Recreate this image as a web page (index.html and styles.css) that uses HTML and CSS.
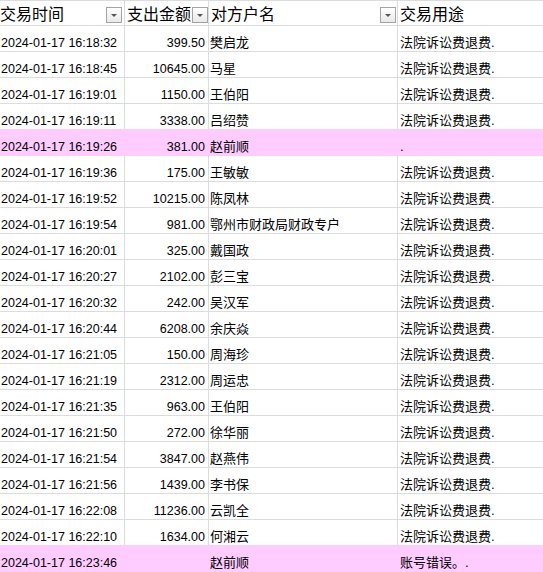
FILE: index.html
```html
<!DOCTYPE html>
<html lang="zh">
<head>
<meta charset="utf-8">
<title>交易明细</title>
<link rel="stylesheet" href="styles.css">
</head>
<body>
<div class="sheet">
  <div class="row head">
    <div class="cell">交易时间<span class="filter f1"><svg width="14" height="14" viewBox="0 0 14 14"><polygon points="4,6 10,6 7,9" fill="#555"/></svg></span></div>
    <div class="cell">支出金额<span class="filter f2"><svg width="14" height="14" viewBox="0 0 14 14"><polygon points="4,6 10,6 7,9" fill="#555"/></svg></span></div>
    <div class="cell">对方户名<span class="filter f3"><svg width="14" height="14" viewBox="0 0 14 14"><polygon points="4,6 10,6 7,9" fill="#555"/></svg></span></div>
    <div class="cell">交易用途</div>
  </div>
  <div class="row"><div class="cell t">2024-01-17 16:18:32</div><div class="cell a">399.50</div><div class="cell n">樊启龙</div><div class="cell p">法院诉讼费退费.</div></div>
  <div class="row"><div class="cell t">2024-01-17 16:18:45</div><div class="cell a">10645.00</div><div class="cell n">马星</div><div class="cell p">法院诉讼费退费.</div></div>
  <div class="row"><div class="cell t">2024-01-17 16:19:01</div><div class="cell a">1150.00</div><div class="cell n">王伯阳</div><div class="cell p">法院诉讼费退费.</div></div>
  <div class="row"><div class="cell t">2024-01-17 16:19:11</div><div class="cell a">3338.00</div><div class="cell n">吕绍赞</div><div class="cell p">法院诉讼费退费.</div></div>
  <div class="row hl"><div class="cell t">2024-01-17 16:19:26</div><div class="cell a">381.00</div><div class="cell n">赵前顺</div><div class="cell p">.</div></div>
  <div class="row"><div class="cell t">2024-01-17 16:19:36</div><div class="cell a">175.00</div><div class="cell n">王敏敏</div><div class="cell p">法院诉讼费退费.</div></div>
  <div class="row"><div class="cell t">2024-01-17 16:19:52</div><div class="cell a">10215.00</div><div class="cell n">陈凤林</div><div class="cell p">法院诉讼费退费.</div></div>
  <div class="row"><div class="cell t">2024-01-17 16:19:54</div><div class="cell a">981.00</div><div class="cell n">鄂州市财政局财政专户</div><div class="cell p">法院诉讼费退费.</div></div>
  <div class="row"><div class="cell t">2024-01-17 16:20:01</div><div class="cell a">325.00</div><div class="cell n">戴国政</div><div class="cell p">法院诉讼费退费.</div></div>
  <div class="row"><div class="cell t">2024-01-17 16:20:27</div><div class="cell a">2102.00</div><div class="cell n">彭三宝</div><div class="cell p">法院诉讼费退费.</div></div>
  <div class="row"><div class="cell t">2024-01-17 16:20:32</div><div class="cell a">242.00</div><div class="cell n">吴汉军</div><div class="cell p">法院诉讼费退费.</div></div>
  <div class="row"><div class="cell t">2024-01-17 16:20:44</div><div class="cell a">6208.00</div><div class="cell n">余庆焱</div><div class="cell p">法院诉讼费退费.</div></div>
  <div class="row"><div class="cell t">2024-01-17 16:21:05</div><div class="cell a">150.00</div><div class="cell n">周海珍</div><div class="cell p">法院诉讼费退费.</div></div>
  <div class="row"><div class="cell t">2024-01-17 16:21:19</div><div class="cell a">2312.00</div><div class="cell n">周运忠</div><div class="cell p">法院诉讼费退费.</div></div>
  <div class="row"><div class="cell t">2024-01-17 16:21:35</div><div class="cell a">963.00</div><div class="cell n">王伯阳</div><div class="cell p">法院诉讼费退费.</div></div>
  <div class="row"><div class="cell t">2024-01-17 16:21:50</div><div class="cell a">272.00</div><div class="cell n">徐华丽</div><div class="cell p">法院诉讼费退费.</div></div>
  <div class="row"><div class="cell t">2024-01-17 16:21:54</div><div class="cell a">3847.00</div><div class="cell n">赵燕伟</div><div class="cell p">法院诉讼费退费.</div></div>
  <div class="row"><div class="cell t">2024-01-17 16:21:56</div><div class="cell a">1439.00</div><div class="cell n">李书保</div><div class="cell p">法院诉讼费退费.</div></div>
  <div class="row"><div class="cell t">2024-01-17 16:22:08</div><div class="cell a">11236.00</div><div class="cell n">云凯全</div><div class="cell p">法院诉讼费退费.</div></div>
  <div class="row"><div class="cell t">2024-01-17 16:22:10</div><div class="cell a">1634.00</div><div class="cell n">何湘云</div><div class="cell p">法院诉讼费退费.</div></div>
  <div class="row hl"><div class="cell t">2024-01-17 16:23:46</div><div class="cell a"></div><div class="cell n">赵前顺</div><div class="cell p">账号错误。.</div></div>
</div>
</body>
</html>
```

FILE: styles.css
```css
html, body {
  margin: 0;
  padding: 0;
  background: #ffffff;
}

body {
  font-family: "Liberation Sans", "Noto Sans CJK SC", sans-serif;
  color: #000000;
  overflow: hidden;
}

.sheet {
  width: 543px;
}

.row {
  display: grid;
  grid-template-columns: 125px 84px 189px 1fr;
  height: 26px;
  box-sizing: border-box;
  border-bottom: 1px solid #dadcdd;
}

.cell {
  box-sizing: border-box;
  border-right: 1px solid #dadcdd;
  display: flex;
  align-items: flex-end;
  padding: 0 0 1px 1px;
  font-size: 13px;
  line-height: 14px;
  white-space: nowrap;
  overflow: hidden;
}

.cell:last-child {
  border-right: 0;
}

.t, .a {
  font-size: 12.5px;
}

.a {
  justify-content: flex-end;
  padding-right: 3px;
}

.n {
  padding-left: 1px;
}

.p {
  padding-left: 2px;
}

.head {
  border-top: 1px solid #dadcdd;
}

.head .cell {
  position: relative;
  align-items: flex-start;
  font-size: 16px;
  line-height: 16px;
  padding: 6px 0 0 2px;
  overflow: visible;
}

.head .cell:first-child {
  padding-left: 0;
}

.filter {
  position: absolute;
  top: 6px;
  right: 2px;
  width: 16px;
  height: 16px;
  box-sizing: border-box;
  border: 1px solid #a3a3a3;
  background: linear-gradient(#ffffff, #e9e9e9);
  display: flex;
  align-items: center;
  justify-content: center;
}

.filter.f2 {
  right: 0;
}

.filter.f3 {
  right: 1px;
}

.row.hl {
  background: #ffccff;
  border-bottom-color: #ffccff;
  margin-top: -1px;
  padding-top: 1px;
  height: 27px;
}

.row.hl .cell {
  border-right-color: transparent;
}
```
